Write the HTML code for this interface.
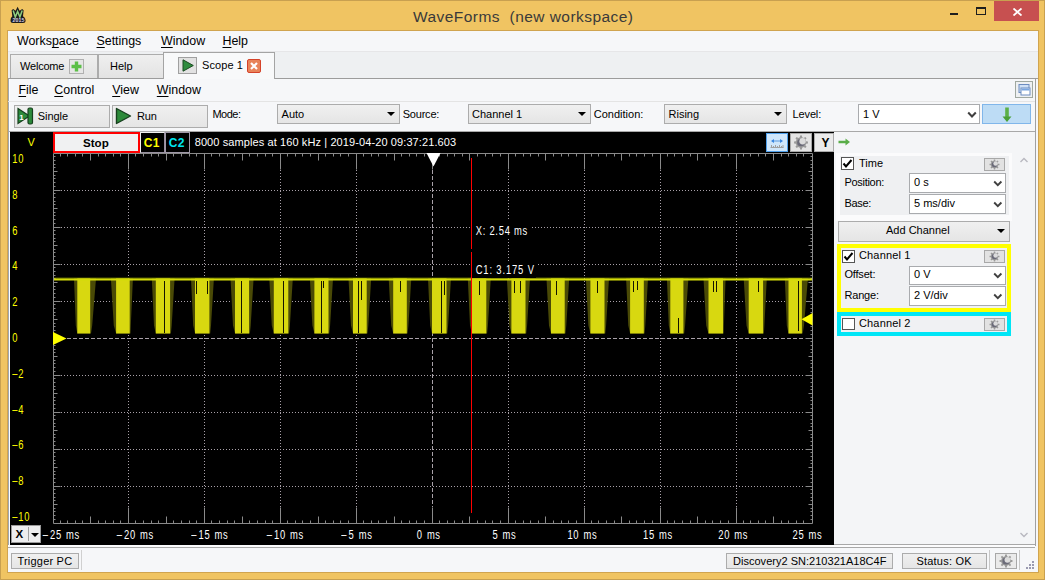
<!DOCTYPE html>
<html><head><meta charset="utf-8"><style>
*{margin:0;padding:0;box-sizing:border-box}
html,body{width:1045px;height:580px;overflow:hidden;background:#f0c462;font-family:"Liberation Sans",sans-serif;font-size:12px;color:#000}
.a{position:absolute}
.t{position:absolute;white-space:nowrap;line-height:1}
.btn{position:absolute;border:1px solid #acacac;background:linear-gradient(#f0f0f0,#e5e5e5)}
.cmb{position:absolute;border:1px solid #acacac;background:linear-gradient(#f0f0f0,#e5e5e5)}
.cmbw{position:absolute;border:1px solid #a9abae;background:#fff}
.arr{position:absolute;width:0;height:0;border-left:4px solid transparent;border-right:4px solid transparent;border-top:4px solid #000}
u{text-decoration:underline;text-underline-offset:1.5px}
svg .dot{stroke:#a8a0a8;stroke-width:1;stroke-dasharray:1 2}
svg .dash{stroke:#a8a0a8;stroke-width:1;stroke-dasharray:4 2}
svg .ax{stroke:#8a8a8a;stroke-width:1;fill:none}
</style></head><body>
<svg class="a" style="left:0;top:0" width="40" height="30"><path d="M10.5 20.5Q10.5 17.8 12.3 16.3L11.6 10.2L13.2 9L15.6 10.8L17.6 6.8L19.6 10.8L22.2 9L23.6 10.2L23 16.3Q25.6 17.8 25.6 20.5Q25.6 23 23 23H13Q10.5 23 10.5 20.5Z" fill="#1c1c1c"/><path d="M13.2 10.5L15.3 17L17.6 11.5L19.9 17L22.2 10.5" stroke="#90d080" stroke-width="1.5" fill="none"/><text x="12.6" y="21.6" font-size="5.2" font-weight="bold" fill="#d8d0e8" font-family="Liberation Sans" letter-spacing="0.1">2015</text></svg>
<div class="t" style="left:413.0px;top:8.98px;font-size:15.5px;color:#3a3a3a;letter-spacing:0.45px">WaveForms&nbsp;&nbsp;(new workspace)</div>
<div class="a" style="left:950px;top:13px;width:8px;height:2px;background:#1e1e1e"></div>
<div class="a" style="left:976px;top:7px;width:10px;height:8px;border:1px solid #1e1e1e;border-top-width:2px"></div>
<div class="a" style="left:994px;top:1px;width:45px;height:20px;background:#c75050"></div>
<svg class="a" style="left:1013px;top:8px" width="9" height="8"><path d="M0.5 0.5L8.5 7.5M8.5 0.5L0.5 7.5" stroke="#fff" stroke-width="1.8"/></svg>
<div class="a" style="left:8px;top:31px;width:1030px;height:541px;background:#f6f7f9"></div>
<div class="a" style="left:7px;top:30px;width:1032px;height:543px;border:1px solid #d0a450"></div>
<div class="a" style="left:0;top:0;width:1045px;height:580px;border:1px solid #c8a050"></div>
<div class="a" style="left:8px;top:79px;width:1px;height:466px;background:#a0a8b0"></div>
<div class="a" style="left:9px;top:79px;width:1px;height:466px;background:#fff"></div>
<div class="t" style="left:17.0px;top:35.34px;font-size:12.4px;">Works<u>p</u>ace</div>
<div class="t" style="left:96.5px;top:35.34px;font-size:12.4px;"><u>S</u>ettings</div>
<div class="t" style="left:161.0px;top:35.34px;font-size:12.4px;"><u>W</u>indow</div>
<div class="t" style="left:222.5px;top:35.34px;font-size:12.4px;"><u>H</u>elp</div>
<div class="a" style="left:8px;top:51px;width:1030px;height:28px;background:#eef0f2;border-top:1px solid #e6e6e8;border-bottom:1px solid #9c9c9c"></div>
<div class="a" style="left:10px;top:54px;width:88px;height:24px;background:linear-gradient(#efefef,#e3e3e3);border:1px solid #acacac;border-bottom:none"></div>
<div class="t" style="left:20.0px;top:61.01px;font-size:11px;letter-spacing:-0.2px">Welcome</div>
<div class="a" style="left:69px;top:59px;width:15px;height:15px;border:1px solid #b0b0b0;background:#e6e6e6"></div>
<svg class="a" style="left:69px;top:59px" width="15" height="15"><path d="M7.5 2.5V12.5M2.5 7.5H12.5" stroke="#5cbf48" stroke-width="3.4"/></svg>
<div class="a" style="left:98px;top:54px;width:68px;height:24px;background:linear-gradient(#efefef,#e3e3e3);border:1px solid #acacac;border-bottom:none"></div>
<div class="t" style="left:110.0px;top:61.01px;font-size:11px;">Help</div>
<div class="a" style="left:163px;top:52px;width:112px;height:27px;background:#f8f9fa;border:1px solid #a4a4a4;border-bottom:none"></div>
<div class="a" style="left:178px;top:57px;width:19px;height:17px;border:1px solid #a0a0a0;background:#e2e2e2"></div>
<svg class="a" style="left:182px;top:59px" width="12" height="13"><path d="M1 0.8L11.3 6.5L1 12.2Z" fill="#2e8c3e" stroke="#1b4a22" stroke-width="1"/></svg>
<div class="t" style="left:202.0px;top:59.71px;font-size:11px;letter-spacing:0.1px">Scope 1</div>
<div class="a" style="left:247px;top:59px;width:14px;height:14px;background:#e8845a;border:1px solid #d5432a;border-radius:2px"></div>
<svg class="a" style="left:247px;top:59px" width="14" height="14"><path d="M4 4L10 10M10 4L4 10" stroke="#fff" stroke-width="2.2"/></svg>
<div class="t" style="left:18.5px;top:84.04px;font-size:12.4px;"><u>F</u>ile</div>
<div class="t" style="left:54.3px;top:84.04px;font-size:12.4px;"><u>C</u>ontrol</div>
<div class="t" style="left:112.2px;top:84.04px;font-size:12.4px;"><u>V</u>iew</div>
<div class="t" style="left:156.8px;top:84.04px;font-size:12.4px;"><u>W</u>indow</div>
<div class="a" style="left:1035px;top:79px;width:1px;height:467px;background:#a0a0a0"></div>
<div class="a" style="left:1015px;top:81px;width:18px;height:17px;border:1px solid #a0a8a0;background:#eef0f2"></div>
<svg class="a" style="left:1015px;top:81px" width="18" height="17"><rect x="4" y="3.5" width="10" height="8" fill="#cfe0f5" stroke="#6c8cc0"/><rect x="6" y="7" width="9" height="7" fill="#fff" stroke="#6c8cc0"/><rect x="6.5" y="7.5" width="8" height="2" fill="#7aa6e0"/></svg>
<div class="a" style="left:8px;top:101px;width:1027px;height:1px;background:#e4e4e4"></div>
<div class="btn" style="left:14px;top:105px;width:96px;height:23px"></div>
<svg class="a" style="left:16px;top:106px" width="20" height="20"><path d="M2 2.5L13.5 10L2 17.5Z" fill="#2c8a3a" stroke="#173f1e" stroke-width="1.2"/><rect x="12" y="2" width="4.5" height="16" rx="1.5" fill="#2c8a3a" stroke="#173f1e" stroke-width="1.2"/><text x="3.2" y="13.5" font-size="8" font-weight="bold" fill="#fff" font-family="Liberation Sans">1</text></svg>
<div class="t" style="left:37.8px;top:110.71px;font-size:11px;letter-spacing:-0.05px">Single</div>
<div class="btn" style="left:112px;top:105px;width:96px;height:23px"></div>
<svg class="a" style="left:114px;top:106px" width="20" height="20"><path d="M2.5 2.5L16.5 10L2.5 17.5Z" fill="#2c8a3a" stroke="#173f1e" stroke-width="1.4" stroke-linejoin="round"/></svg>
<div class="t" style="left:137.0px;top:111.11px;font-size:11px;letter-spacing:-0.2px">Run</div>
<div class="t" style="left:212.4px;top:109.11px;font-size:11px;letter-spacing:-0.5px">Mode:</div>
<div class="cmb" style="left:277px;top:104px;width:123px;height:20px"></div>
<div class="t" style="left:281.6px;top:109.11px;font-size:11px;">Auto</div>
<div class="arr" style="left:387px;top:112px"></div>
<div class="cmb" style="left:468px;top:104px;width:123px;height:20px"></div>
<div class="t" style="left:472.0px;top:109.11px;font-size:11px;">Channel 1</div>
<div class="arr" style="left:578px;top:112px"></div>
<div class="cmb" style="left:664px;top:104px;width:123px;height:20px"></div>
<div class="t" style="left:668.5px;top:109.11px;font-size:11px;">Rising</div>
<div class="arr" style="left:774px;top:112px"></div>
<div class="t" style="left:402.7px;top:109.11px;font-size:11px;letter-spacing:-0.2px">Source:</div>
<div class="t" style="left:593.8px;top:109.11px;font-size:11px;letter-spacing:0px">Condition:</div>
<div class="t" style="left:792.6px;top:109.11px;font-size:11px;letter-spacing:-0.15px">Level:</div>
<div class="cmbw" style="left:858px;top:104px;width:122px;height:20px"></div>
<div class="t" style="left:863.0px;top:109.11px;font-size:11px;">1 V</div>
<svg class="a" style="left:967px;top:111px" width="10" height="8"><path d="M1.2 1.5L5 5.5L8.8 1.5" stroke="#404040" stroke-width="2" fill="none"/></svg>
<div class="a" style="left:982px;top:104px;width:49px;height:20px;background:#bddcf5;border:1px solid #80b6ea"></div>
<svg class="a" style="left:1000px;top:106px" width="14" height="17"><rect x="5.2" y="1.5" width="3.6" height="10" fill="#5cb048"/><path d="M2.5 10.5H11.5L7 16Z" fill="#4aa038"/></svg>
<div class="a" style="left:8px;top:131px;width:1027px;height:1px;background:#a8a8a8"></div>
<div class="a" style="left:10px;top:132px;width:824px;height:413px;background:#000"></div>
<div class="t" style="left:27.4px;top:137.21px;font-size:11px;color:#ffff00">V</div>
<div class="a" style="left:53px;top:132px;width:87px;height:21px;background:#f0f1f2;border:2px solid #ff0000"></div>
<div class="t" style="left:83.0px;top:137.14px;font-size:11.6px;font-weight:bold;">Stop</div>
<div class="a" style="left:140px;top:132px;width:25px;height:21px;border:1px solid;border-color:#f0f0f0 #9890a0 #9890a0 #f0f0f0;background:#000"></div>
<div class="t" style="left:143.7px;top:137.19px;font-size:12px;font-weight:bold;color:#ffff00;letter-spacing:0.3px">C1</div>
<div class="a" style="left:165px;top:132px;width:25px;height:21px;border:1px solid #a098a8;background:#000"></div>
<div class="t" style="left:168.7px;top:137.19px;font-size:12px;font-weight:bold;color:#00e6f0;letter-spacing:0.3px">C2</div>
<div class="t" style="left:194.7px;top:137.31px;font-size:11px;color:#fff;letter-spacing:0.1px">8000 samples at 160 kHz | 2019-04-20 09:37:21.603</div>
<div class="a" style="left:766px;top:133px;width:22px;height:19px;background:#cfe6fb;border:1px solid #4fa0ec"></div>
<svg class="a" style="left:766px;top:133px" width="22" height="19"><path d="M6 8H16" stroke="#5a9ae0" stroke-width="1"/><path d="M5 8L8 6V10Z M17 8L14 6V10Z" fill="#3a86e0"/><path d="M4.5 14.5H17.5M5.5 14.5V12M7.5 14.5V13M9.5 14.5V12M11.5 14.5V13M13.5 14.5V12M15.5 14.5V13M17 14.5V12" stroke="#a0a0a0" stroke-width="1" fill="none"/></svg>
<div class="a" style="left:790px;top:133px;width:22px;height:19px;border:1px solid #a8a8a8;background:#e4e4e4"></div><svg class="a" style="left:790px;top:133px" width="22" height="19"><path d="M16.13 8.37L17.93 8.54L17.93 10.46L16.13 10.63L15.42 12.33L16.58 13.72L15.22 15.08L13.83 13.92L12.13 14.63L11.96 16.43L10.04 16.43L9.87 14.63L8.17 13.92L6.78 15.08L5.42 13.72L6.58 12.33L5.87 10.63L4.07 10.46L4.07 8.54L5.87 8.37L6.58 6.67L5.42 5.28L6.78 3.92L8.17 5.08L9.87 4.37L10.04 2.57L11.96 2.57L12.13 4.37L13.83 5.08L15.22 3.92L16.58 5.28L15.42 6.67Z" fill="#9a9a9a"/><circle cx="11.0" cy="9.5" r="3.85" fill="#6a6a78"/><circle cx="12.54" cy="8.24" r="3.15" fill="#dcdcdc"/></svg>
<div class="a" style="left:814px;top:133px;width:20px;height:19px;background:#ebebeb;border:1px solid #ababab"></div>
<div class="t" style="left:821.5px;top:137.09px;font-size:12px;font-weight:bold;">Y</div>
<svg class="a" style="left:0;top:0" width="1045" height="580">
<line x1="128.5" y1="170" x2="128.5" y2="507" class="dot"/>
<line x1="204.5" y1="170" x2="204.5" y2="507" class="dot"/>
<line x1="280.5" y1="170" x2="280.5" y2="507" class="dot"/>
<line x1="356.5" y1="170" x2="356.5" y2="507" class="dot"/>
<line x1="508.5" y1="170" x2="508.5" y2="507" class="dot"/>
<line x1="584.5" y1="170" x2="584.5" y2="507" class="dot"/>
<line x1="660.5" y1="170" x2="660.5" y2="507" class="dot"/>
<line x1="736.5" y1="170" x2="736.5" y2="507" class="dot"/>
<line x1="61" y1="190.5" x2="805" y2="190.5" class="dot"/>
<line x1="61" y1="227.5" x2="805" y2="227.5" class="dot"/>
<line x1="61" y1="264.5" x2="805" y2="264.5" class="dot"/>
<line x1="61" y1="301.5" x2="805" y2="301.5" class="dot"/>
<line x1="61" y1="375.5" x2="805" y2="375.5" class="dot"/>
<line x1="61" y1="412.5" x2="805" y2="412.5" class="dot"/>
<line x1="61" y1="449.5" x2="805" y2="449.5" class="dot"/>
<line x1="61" y1="486.5" x2="805" y2="486.5" class="dot"/>
<line x1="432.5" y1="170" x2="432.5" y2="507" class="dash"/>
<line x1="61" y1="338.5" x2="805" y2="338.5" class="dash"/>
<path d="M53.5 153.5 H812.5 V523.5 H53.5 Z" class="ax"/>
<path d="M60.5 153.5v3M60.5 523.5v-3M67.5 153.5v3M67.5 523.5v-3M75.5 153.5v3M75.5 523.5v-3M82.5 153.5v3M82.5 523.5v-3M90.5 153.5v7M90.5 523.5v-7M98.5 153.5v3M98.5 523.5v-3M105.5 153.5v3M105.5 523.5v-3M113.5 153.5v3M113.5 523.5v-3M120.5 153.5v3M120.5 523.5v-3M128.5 153.5v16M128.5 523.5v-16M135.5 153.5v3M135.5 523.5v-3M143.5 153.5v3M143.5 523.5v-3M151.5 153.5v3M151.5 523.5v-3M158.5 153.5v3M158.5 523.5v-3M166.5 153.5v7M166.5 523.5v-7M173.5 153.5v3M173.5 523.5v-3M181.5 153.5v3M181.5 523.5v-3M189.5 153.5v3M189.5 523.5v-3M196.5 153.5v3M196.5 523.5v-3M204.5 153.5v16M204.5 523.5v-16M211.5 153.5v3M211.5 523.5v-3M219.5 153.5v3M219.5 523.5v-3M227.5 153.5v3M227.5 523.5v-3M234.5 153.5v3M234.5 523.5v-3M242.5 153.5v7M242.5 523.5v-7M249.5 153.5v3M249.5 523.5v-3M257.5 153.5v3M257.5 523.5v-3M265.5 153.5v3M265.5 523.5v-3M272.5 153.5v3M272.5 523.5v-3M280.5 153.5v16M280.5 523.5v-16M287.5 153.5v3M287.5 523.5v-3M295.5 153.5v3M295.5 523.5v-3M302.5 153.5v3M302.5 523.5v-3M310.5 153.5v3M310.5 523.5v-3M318.5 153.5v7M318.5 523.5v-7M325.5 153.5v3M325.5 523.5v-3M333.5 153.5v3M333.5 523.5v-3M340.5 153.5v3M340.5 523.5v-3M348.5 153.5v3M348.5 523.5v-3M356.5 153.5v16M356.5 523.5v-16M363.5 153.5v3M363.5 523.5v-3M371.5 153.5v3M371.5 523.5v-3M378.5 153.5v3M378.5 523.5v-3M386.5 153.5v3M386.5 523.5v-3M394.5 153.5v7M394.5 523.5v-7M401.5 153.5v3M401.5 523.5v-3M409.5 153.5v3M409.5 523.5v-3M416.5 153.5v3M416.5 523.5v-3M424.5 153.5v3M424.5 523.5v-3M432.5 153.5v16M432.5 523.5v-16M439.5 153.5v3M439.5 523.5v-3M447.5 153.5v3M447.5 523.5v-3M454.5 153.5v3M454.5 523.5v-3M462.5 153.5v3M462.5 523.5v-3M469.5 153.5v7M469.5 523.5v-7M477.5 153.5v3M477.5 523.5v-3M485.5 153.5v3M485.5 523.5v-3M492.5 153.5v3M492.5 523.5v-3M500.5 153.5v3M500.5 523.5v-3M508.5 153.5v16M508.5 523.5v-16M515.5 153.5v3M515.5 523.5v-3M523.5 153.5v3M523.5 523.5v-3M530.5 153.5v3M530.5 523.5v-3M538.5 153.5v3M538.5 523.5v-3M545.5 153.5v7M545.5 523.5v-7M553.5 153.5v3M553.5 523.5v-3M561.5 153.5v3M561.5 523.5v-3M568.5 153.5v3M568.5 523.5v-3M576.5 153.5v3M576.5 523.5v-3M584.5 153.5v16M584.5 523.5v-16M591.5 153.5v3M591.5 523.5v-3M598.5 153.5v3M598.5 523.5v-3M606.5 153.5v3M606.5 523.5v-3M614.5 153.5v3M614.5 523.5v-3M621.5 153.5v7M621.5 523.5v-7M629.5 153.5v3M629.5 523.5v-3M636.5 153.5v3M636.5 523.5v-3M644.5 153.5v3M644.5 523.5v-3M652.5 153.5v3M652.5 523.5v-3M660.5 153.5v16M660.5 523.5v-16M667.5 153.5v3M667.5 523.5v-3M674.5 153.5v3M674.5 523.5v-3M682.5 153.5v3M682.5 523.5v-3M690.5 153.5v3M690.5 523.5v-3M697.5 153.5v7M697.5 523.5v-7M705.5 153.5v3M705.5 523.5v-3M712.5 153.5v3M712.5 523.5v-3M720.5 153.5v3M720.5 523.5v-3M728.5 153.5v3M728.5 523.5v-3M736.5 153.5v16M736.5 523.5v-16M743.5 153.5v3M743.5 523.5v-3M750.5 153.5v3M750.5 523.5v-3M758.5 153.5v3M758.5 523.5v-3M765.5 153.5v3M765.5 523.5v-3M773.5 153.5v7M773.5 523.5v-7M781.5 153.5v3M781.5 523.5v-3M788.5 153.5v3M788.5 523.5v-3M796.5 153.5v3M796.5 523.5v-3M803.5 153.5v3M803.5 523.5v-3M53.5 156.5h2M812.5 156.5h-2M53.5 160.5h2M812.5 160.5h-2M53.5 164.5h2M812.5 164.5h-2M53.5 167.5h2M812.5 167.5h-2M53.5 171.5h4M812.5 171.5h-4M53.5 175.5h2M812.5 175.5h-2M53.5 178.5h2M812.5 178.5h-2M53.5 182.5h2M812.5 182.5h-2M53.5 186.5h2M812.5 186.5h-2M53.5 190.5h7M812.5 190.5h-7M53.5 193.5h2M812.5 193.5h-2M53.5 197.5h2M812.5 197.5h-2M53.5 201.5h2M812.5 201.5h-2M53.5 204.5h2M812.5 204.5h-2M53.5 208.5h4M812.5 208.5h-4M53.5 212.5h2M812.5 212.5h-2M53.5 215.5h2M812.5 215.5h-2M53.5 219.5h2M812.5 219.5h-2M53.5 223.5h2M812.5 223.5h-2M53.5 227.5h7M812.5 227.5h-7M53.5 230.5h2M812.5 230.5h-2M53.5 234.5h2M812.5 234.5h-2M53.5 238.5h2M812.5 238.5h-2M53.5 241.5h2M812.5 241.5h-2M53.5 245.5h4M812.5 245.5h-4M53.5 249.5h2M812.5 249.5h-2M53.5 252.5h2M812.5 252.5h-2M53.5 256.5h2M812.5 256.5h-2M53.5 260.5h2M812.5 260.5h-2M53.5 264.5h7M812.5 264.5h-7M53.5 267.5h2M812.5 267.5h-2M53.5 271.5h2M812.5 271.5h-2M53.5 275.5h2M812.5 275.5h-2M53.5 278.5h2M812.5 278.5h-2M53.5 282.5h4M812.5 282.5h-4M53.5 286.5h2M812.5 286.5h-2M53.5 289.5h2M812.5 289.5h-2M53.5 293.5h2M812.5 293.5h-2M53.5 297.5h2M812.5 297.5h-2M53.5 301.5h7M812.5 301.5h-7M53.5 304.5h2M812.5 304.5h-2M53.5 308.5h2M812.5 308.5h-2M53.5 312.5h2M812.5 312.5h-2M53.5 315.5h2M812.5 315.5h-2M53.5 319.5h4M812.5 319.5h-4M53.5 323.5h2M812.5 323.5h-2M53.5 326.5h2M812.5 326.5h-2M53.5 330.5h2M812.5 330.5h-2M53.5 334.5h2M812.5 334.5h-2M53.5 338.5h7M812.5 338.5h-7M53.5 341.5h2M812.5 341.5h-2M53.5 345.5h2M812.5 345.5h-2M53.5 349.5h2M812.5 349.5h-2M53.5 352.5h2M812.5 352.5h-2M53.5 356.5h4M812.5 356.5h-4M53.5 360.5h2M812.5 360.5h-2M53.5 363.5h2M812.5 363.5h-2M53.5 367.5h2M812.5 367.5h-2M53.5 371.5h2M812.5 371.5h-2M53.5 375.5h7M812.5 375.5h-7M53.5 378.5h2M812.5 378.5h-2M53.5 382.5h2M812.5 382.5h-2M53.5 386.5h2M812.5 386.5h-2M53.5 389.5h2M812.5 389.5h-2M53.5 393.5h4M812.5 393.5h-4M53.5 397.5h2M812.5 397.5h-2M53.5 400.5h2M812.5 400.5h-2M53.5 404.5h2M812.5 404.5h-2M53.5 408.5h2M812.5 408.5h-2M53.5 412.5h7M812.5 412.5h-7M53.5 415.5h2M812.5 415.5h-2M53.5 419.5h2M812.5 419.5h-2M53.5 423.5h2M812.5 423.5h-2M53.5 426.5h2M812.5 426.5h-2M53.5 430.5h4M812.5 430.5h-4M53.5 434.5h2M812.5 434.5h-2M53.5 437.5h2M812.5 437.5h-2M53.5 441.5h2M812.5 441.5h-2M53.5 445.5h2M812.5 445.5h-2M53.5 449.5h7M812.5 449.5h-7M53.5 452.5h2M812.5 452.5h-2M53.5 456.5h2M812.5 456.5h-2M53.5 460.5h2M812.5 460.5h-2M53.5 463.5h2M812.5 463.5h-2M53.5 467.5h4M812.5 467.5h-4M53.5 471.5h2M812.5 471.5h-2M53.5 474.5h2M812.5 474.5h-2M53.5 478.5h2M812.5 478.5h-2M53.5 482.5h2M812.5 482.5h-2M53.5 486.5h7M812.5 486.5h-7M53.5 489.5h2M812.5 489.5h-2M53.5 493.5h2M812.5 493.5h-2M53.5 497.5h2M812.5 497.5h-2M53.5 500.5h2M812.5 500.5h-2M53.5 504.5h4M812.5 504.5h-4M53.5 508.5h2M812.5 508.5h-2M53.5 511.5h2M812.5 511.5h-2M53.5 515.5h2M812.5 515.5h-2M53.5 519.5h2M812.5 519.5h-2" class="ax"/>
<path d="M74.0 278.5L75.8 325.6L77.3 333.6H91.0L92.2 325.6L96.0 278.5ZM110.9 278.5L113.8 325.6L116.1 333.6H130.5L130.8 325.6L132.9 278.5ZM151.8 278.5L154.0 325.6L155.8 333.6H170.9L171.7 325.6L174.6 278.5ZM191.0 278.5L193.2 325.6L195.0 333.6H210.2L211.0 325.6L213.9 278.5ZM230.5 278.5L233.0 325.6L235.0 333.6H249.9L250.7 325.6L253.6 278.5ZM269.3 278.5L271.8 325.6L273.8 333.6H289.1L289.9 325.6L292.8 278.5ZM309.9 278.5L312.4 325.6L314.4 333.6H329.3L330.1 325.6L333.0 278.5ZM348.5 278.5L351.0 325.6L353.0 333.6H367.5L368.3 325.6L371.2 278.5ZM388.7 278.5L391.2 325.6L393.2 333.6H407.6L408.4 325.6L411.3 278.5ZM428.0 278.5L430.2 325.6L432.0 333.6H447.3L448.1 325.6L451.0 278.5ZM467.8 278.5L470.0 325.6L471.8 333.6H487.1L487.9 325.6L490.8 278.5ZM506.9 278.5L509.4 325.6L511.4 333.6H526.3L527.1 325.6L530.0 278.5ZM546.5 278.5L549.0 325.6L551.0 333.6H565.5L566.3 325.6L569.2 278.5ZM585.9 278.5L588.4 325.6L590.4 333.6H605.3L606.1 325.6L609.0 278.5ZM626.1 278.5L628.3 325.6L630.1 333.6H644.6L645.3 325.6L648.0 278.5ZM666.9 278.5L668.8 325.6L670.3 333.6H684.2L685.1 325.6L688.4 278.5ZM703.5 278.5L706.2 325.6L708.5 333.6H723.8L723.9 325.6L725.6 278.5ZM743.7 278.5L746.5 325.6L748.7 333.6H763.9L764.4 325.6L766.8 278.5ZM784.8 278.5L786.8 325.6L788.5 333.6H802.7L804.0 325.6L807.9 278.5Z" fill="#4a4a06"/>
<path d="M77.3 278.5H90.2V333.6H77.3ZM116.1 278.5H129.7V333.6H116.1ZM155.8 278.5H170.1V333.6H155.8ZM195.0 278.5H209.4V333.6H195.0ZM235.0 278.5H249.1V333.6H235.0ZM273.8 278.5H288.3V333.6H273.8ZM314.4 278.5H328.5V333.6H314.4ZM353.0 278.5H366.7V333.6H353.0ZM393.2 278.5H406.8V333.6H393.2ZM432.0 278.5H446.5V333.6H432.0ZM471.8 278.5H486.3V333.6H471.8ZM511.4 278.5H525.5V333.6H511.4ZM551.0 278.5H564.7V333.6H551.0ZM590.4 278.5H604.5V333.6H590.4ZM630.1 278.5H643.8V333.6H630.1ZM670.3 278.5H683.4V333.6H670.3ZM708.5 278.5H723.0V333.6H708.5ZM748.7 278.5H763.1V333.6H748.7ZM788.5 278.5H801.9V333.6H788.5Z" fill="#d8d810"/>
<rect x="54" y="277" width="758" height="1" fill="#3a4200" opacity="0.7"/><rect x="54" y="278.3" width="758" height="2.2" fill="#d4dc08"/>
<path d="M164.5 281V333M196.5 281V294M207.5 281V294M241.5 281V333M283.5 281V333M321.5 281V333M323.5 281V288M358.5 281V333M361.5 281V300M400.5 281V292M441.5 281V333M444.5 281V295M479.5 281V295M514.5 281V293M520.5 281V293M556.5 281V295M597.5 281V293M633.5 281V292M637.5 281V290M678.5 318V333M713.5 281V292M716.5 281V292M758.5 281V292M798.5 281V331" stroke="#141400" stroke-width="1"/>
<rect x="472" y="220" width="59" height="19" fill="#000"/><rect x="472" y="262" width="64" height="16" fill="#000"/>
<rect x="471" y="158" width="1" height="91" fill="#ff0000"/><rect x="471" y="252" width="1" height="261" fill="#ff0000"/>
<path d="M426.5 153H440.5L433.5 166.5Z" fill="#fff"/>
<path d="M53 332V345L66.5 338.5Z" fill="#ffff00"/>
<path d="M812.5 313V325.5L801.5 319.2Z" fill="#ffff00"/>
</svg>
<div class="t" style="left:12.3px;top:152.96px;font-size:9.4px;color:#ffff00;transform:scaleY(1.3);transform-origin:0 0;letter-spacing:0.8px">10</div>
<div class="t" style="left:12.3px;top:188.76px;font-size:9.4px;color:#ffff00;transform:scaleY(1.3);transform-origin:0 0;letter-spacing:0.8px">8</div>
<div class="t" style="left:12.3px;top:224.56px;font-size:9.4px;color:#ffff00;transform:scaleY(1.3);transform-origin:0 0;letter-spacing:0.8px">6</div>
<div class="t" style="left:12.3px;top:260.36px;font-size:9.4px;color:#ffff00;transform:scaleY(1.3);transform-origin:0 0;letter-spacing:0.8px">4</div>
<div class="t" style="left:12.3px;top:296.16px;font-size:9.4px;color:#ffff00;transform:scaleY(1.3);transform-origin:0 0;letter-spacing:0.8px">2</div>
<div class="t" style="left:12.3px;top:331.96px;font-size:9.4px;color:#ffff00;transform:scaleY(1.3);transform-origin:0 0;letter-spacing:0.8px">0</div>
<div class="t" style="left:12.3px;top:367.76px;font-size:9.4px;color:#ffff00;transform:scaleY(1.3);transform-origin:0 0;letter-spacing:0.8px">&#8211;2</div>
<div class="t" style="left:12.3px;top:403.56px;font-size:9.4px;color:#ffff00;transform:scaleY(1.3);transform-origin:0 0;letter-spacing:0.8px">&#8211;4</div>
<div class="t" style="left:12.3px;top:439.36px;font-size:9.4px;color:#ffff00;transform:scaleY(1.3);transform-origin:0 0;letter-spacing:0.8px">&#8211;6</div>
<div class="t" style="left:12.3px;top:475.16px;font-size:9.4px;color:#ffff00;transform:scaleY(1.3);transform-origin:0 0;letter-spacing:0.8px">&#8211;8</div>
<div class="t" style="left:12.3px;top:510.96px;font-size:9.4px;color:#ffff00;transform:scaleY(1.3);transform-origin:0 0;letter-spacing:0.8px">&#8211;10</div>
<div class="t" style="left:42.8px;top:529.26px;font-size:9.4px;color:#fff;transform:scaleY(1.3);transform-origin:0 0;letter-spacing:0.65px;word-spacing:1.0px"><span style="margin-right:1.4px">&#8211;</span>25 ms</div>
<div class="t" style="left:116.8px;top:529.26px;font-size:9.4px;color:#fff;transform:scaleY(1.3);transform-origin:0 0;letter-spacing:0.65px;word-spacing:1.0px"><span style="margin-right:1.4px">&#8211;</span>20 ms</div>
<div class="t" style="left:191.3px;top:529.26px;font-size:9.4px;color:#fff;transform:scaleY(1.3);transform-origin:0 0;letter-spacing:0.65px;word-spacing:1.0px"><span style="margin-right:1.4px">&#8211;</span>15 ms</div>
<div class="t" style="left:266.8px;top:529.26px;font-size:9.4px;color:#fff;transform:scaleY(1.3);transform-origin:0 0;letter-spacing:0.65px;word-spacing:1.0px"><span style="margin-right:1.4px">&#8211;</span>10 ms</div>
<div class="t" style="left:341.3px;top:529.26px;font-size:9.4px;color:#fff;transform:scaleY(1.3);transform-origin:0 0;letter-spacing:0.65px;word-spacing:1.0px"><span style="margin-right:1.4px">&#8211;</span>5 ms</div>
<div class="t" style="left:416.8px;top:529.26px;font-size:9.4px;color:#fff;transform:scaleY(1.3);transform-origin:0 0;letter-spacing:0.65px;word-spacing:1.0px">0 ms</div>
<div class="t" style="left:492.40000000000003px;top:529.26px;font-size:9.4px;color:#fff;transform:scaleY(1.3);transform-origin:0 0;letter-spacing:0.65px;word-spacing:1.0px">5 ms</div>
<div class="t" style="left:567.5px;top:529.26px;font-size:9.4px;color:#fff;transform:scaleY(1.3);transform-origin:0 0;letter-spacing:0.65px;word-spacing:1.0px">10 ms</div>
<div class="t" style="left:643.0999999999999px;top:529.26px;font-size:9.4px;color:#fff;transform:scaleY(1.3);transform-origin:0 0;letter-spacing:0.65px;word-spacing:1.0px">15 ms</div>
<div class="t" style="left:718.3px;top:529.26px;font-size:9.4px;color:#fff;transform:scaleY(1.3);transform-origin:0 0;letter-spacing:0.65px;word-spacing:1.0px">20 ms</div>
<div class="t" style="left:792.5999999999999px;top:529.26px;font-size:9.4px;color:#fff;transform:scaleY(1.3);transform-origin:0 0;letter-spacing:0.65px;word-spacing:1.0px">25 ms</div>
<div class="a" style="left:11px;top:525px;width:30px;height:18px;background:#ededee;border:1px solid #9a9a9a"></div>
<div class="t" style="left:15.5px;top:529.25px;font-size:11.5px;font-weight:bold;">X</div>
<div class="a" style="left:28px;top:527px;width:1px;height:14px;background:#a0a0a0"></div>
<div class="arr" style="left:31px;top:533px;border-left-width:4px;border-right-width:4px;border-top-width:4px"></div>
<div class="t" style="left:475.7px;top:224.66px;font-size:9.4px;color:#fff;transform:scaleY(1.3);transform-origin:0 0;letter-spacing:0.75px">X: 2.54 ms</div>
<div class="t" style="left:475.7px;top:264.06px;font-size:9.4px;color:#fff;transform:scaleY(1.3);transform-origin:0 0;letter-spacing:0.87px">C1: 3.175 V</div>
<div class="a" style="left:834px;top:132px;width:201px;height:413px;background:#f4f5f7"></div>
<svg class="a" style="left:838px;top:138px" width="13" height="8"><path d="M0.5 4H8.5" stroke="#5aad48" stroke-width="2.5"/><path d="M7.5 0.5L12 4L7.5 7.5Z" fill="#5aad48"/></svg>
<div class="a" style="left:835.5px;top:152.5px;width:176px;height:68px;background:#fbfbfc"></div>
<div class="a" style="left:839.5px;top:156px;width:169px;height:59px;background:#eff0f2"></div>
<div class="a" style="left:841px;top:157px;width:13px;height:13px;border:1px solid #555;background:#fff"></div><svg class="a" style="left:841px;top:157px" width="13" height="13"><path d="M2.5 6.5L5 9.5L10.5 3" stroke="#000" stroke-width="2" fill="none"/></svg>
<div class="t" style="left:859.0px;top:158.01px;font-size:11px;">Time</div>
<div class="a" style="left:984px;top:157.5px;width:21px;height:13px;border:1px solid #a8a8a8;background:#e2e2e2"></div><svg class="a" style="left:984px;top:157.5px" width="21" height="13"><path d="M14.16 5.70L15.45 5.81L15.45 7.19L14.16 7.30L13.66 8.52L14.49 9.52L13.52 10.49L12.52 9.66L11.30 10.16L11.19 11.45L9.81 11.45L9.70 10.16L8.48 9.66L7.48 10.49L6.51 9.52L7.34 8.52L6.84 7.30L5.55 7.19L5.55 5.81L6.84 5.70L7.34 4.48L6.51 3.48L7.48 2.51L8.48 3.34L9.70 2.84L9.81 1.55L11.19 1.55L11.30 2.84L12.52 3.34L13.52 2.51L14.49 3.48L13.66 4.48Z" fill="#9a9a9a"/><circle cx="10.5" cy="6.5" r="2.75" fill="#6a6a78"/><circle cx="11.60" cy="5.60" r="2.25" fill="#dcdcdc"/></svg>
<div class="t" style="left:844.5px;top:177.31px;font-size:11px;letter-spacing:-0.3px">Position:</div>
<div class="cmbw" style="left:909px;top:173px;width:97px;height:20px"></div>
<div class="t" style="left:914.0px;top:177.31px;font-size:11px;">0 s</div>
<svg class="a" style="left:993px;top:180px" width="10" height="8"><path d="M1.2 1.5L4.8 5.2L8.4 1.5" stroke="#404040" stroke-width="1.9" fill="none"/></svg>
<div class="t" style="left:844.5px;top:198.01px;font-size:11px;letter-spacing:-0.3px">Base:</div>
<div class="cmbw" style="left:909px;top:194px;width:97px;height:20px"></div>
<div class="t" style="left:914.0px;top:198.01px;font-size:11px;">5 ms/div</div>
<svg class="a" style="left:993px;top:201px" width="10" height="8"><path d="M1.2 1.5L4.8 5.2L8.4 1.5" stroke="#404040" stroke-width="1.9" fill="none"/></svg>
<div class="btn" style="left:838px;top:221px;width:172px;height:21px"></div>
<div class="t" style="left:886.0px;top:225.31px;font-size:11px;letter-spacing:0px">Add Channel</div>
<div class="arr" style="left:996.5px;top:229px"></div>
<div class="a" style="left:837px;top:244px;width:174px;height:68px;border:4px solid #ffff00;background:#f0f1f3"></div>
<div class="a" style="left:841.5px;top:250px;width:13px;height:13px;border:1px solid #555;background:#fff"></div><svg class="a" style="left:841.5px;top:250px" width="13" height="13"><path d="M2.5 6.5L5 9.5L10.5 3" stroke="#000" stroke-width="2" fill="none"/></svg>
<div class="t" style="left:859.0px;top:250.21px;font-size:11px;letter-spacing:0.15px">Channel 1</div>
<div class="a" style="left:984px;top:249.5px;width:21px;height:13px;border:1px solid #a8a8a8;background:#e2e2e2"></div><svg class="a" style="left:984px;top:249.5px" width="21" height="13"><path d="M14.16 5.70L15.45 5.81L15.45 7.19L14.16 7.30L13.66 8.52L14.49 9.52L13.52 10.49L12.52 9.66L11.30 10.16L11.19 11.45L9.81 11.45L9.70 10.16L8.48 9.66L7.48 10.49L6.51 9.52L7.34 8.52L6.84 7.30L5.55 7.19L5.55 5.81L6.84 5.70L7.34 4.48L6.51 3.48L7.48 2.51L8.48 3.34L9.70 2.84L9.81 1.55L11.19 1.55L11.30 2.84L12.52 3.34L13.52 2.51L14.49 3.48L13.66 4.48Z" fill="#9a9a9a"/><circle cx="10.5" cy="6.5" r="2.75" fill="#6a6a78"/><circle cx="11.60" cy="5.60" r="2.25" fill="#dcdcdc"/></svg>
<div class="t" style="left:844.5px;top:269.01px;font-size:11px;letter-spacing:-0.2px">Offset:</div>
<div class="cmbw" style="left:909px;top:265.5px;width:97px;height:19px"></div>
<div class="t" style="left:914.0px;top:269.01px;font-size:11px;">0 V</div>
<svg class="a" style="left:993px;top:272px" width="10" height="8"><path d="M1.2 1.5L4.8 5.2L8.4 1.5" stroke="#404040" stroke-width="1.9" fill="none"/></svg>
<div class="t" style="left:844.5px;top:290.01px;font-size:11px;letter-spacing:-0.2px">Range:</div>
<div class="cmbw" style="left:909px;top:286px;width:97px;height:20px"></div>
<div class="t" style="left:914.0px;top:290.01px;font-size:11px;">2 V/div</div>
<svg class="a" style="left:993px;top:293px" width="10" height="8"><path d="M1.2 1.5L4.8 5.2L8.4 1.5" stroke="#404040" stroke-width="1.9" fill="none"/></svg>
<div class="a" style="left:837px;top:312px;width:174px;height:24px;border:4px solid #00e6f6;background:#f0f1f3"></div>
<div class="a" style="left:841.5px;top:318px;width:13px;height:12px;border:1px solid #555;background:#fff"></div>
<div class="t" style="left:859.0px;top:318.21px;font-size:11px;letter-spacing:0.15px">Channel 2</div>
<div class="a" style="left:984px;top:317.5px;width:21px;height:13px;border:1px solid #a8a8a8;background:#e2e2e2"></div><svg class="a" style="left:984px;top:317.5px" width="21" height="13"><path d="M14.16 5.70L15.45 5.81L15.45 7.19L14.16 7.30L13.66 8.52L14.49 9.52L13.52 10.49L12.52 9.66L11.30 10.16L11.19 11.45L9.81 11.45L9.70 10.16L8.48 9.66L7.48 10.49L6.51 9.52L7.34 8.52L6.84 7.30L5.55 7.19L5.55 5.81L6.84 5.70L7.34 4.48L6.51 3.48L7.48 2.51L8.48 3.34L9.70 2.84L9.81 1.55L11.19 1.55L11.30 2.84L12.52 3.34L13.52 2.51L14.49 3.48L13.66 4.48Z" fill="#9a9a9a"/><circle cx="10.5" cy="6.5" r="2.75" fill="#6a6a78"/><circle cx="11.60" cy="5.60" r="2.25" fill="#dcdcdc"/></svg>
<svg class="a" style="left:1019px;top:156px" width="10" height="8"><path d="M1.5 6L5 2.5L8.5 6" stroke="#b8b8c0" stroke-width="1.4" fill="none"/></svg>
<svg class="a" style="left:1019px;top:531px" width="10" height="8"><path d="M1.5 2L5 5.5L8.5 2" stroke="#b8b8c0" stroke-width="1.4" fill="none"/></svg>
<div class="a" style="left:8px;top:544.5px;width:1027px;height:2.5px;background:#fcfcfd"></div>
<div class="a" style="left:834px;top:544px;width:201px;height:1px;background:#a8a8a8"></div>
<div class="a" style="left:8px;top:547px;width:1027px;height:1px;background:#a8a8a8"></div>
<div class="btn" style="left:11px;top:553px;width:68px;height:16px"></div>
<div class="a" style="left:81px;top:550px;width:1px;height:20px;background:#d0d0d0"></div>
<div class="t" style="left:17.5px;top:555.51px;font-size:11px;letter-spacing:0.2px">Trigger PC</div>
<div class="btn" style="left:726px;top:553px;width:167px;height:16px"></div>
<div class="t" style="left:733.0px;top:555.51px;font-size:11px;letter-spacing:0.02px">Discovery2 SN:210321A18C4F</div>
<div class="btn" style="left:902px;top:553px;width:85px;height:16px"></div>
<div class="t" style="left:916.5px;top:555.51px;font-size:11px;letter-spacing:0.2px">Status: OK</div>
<div class="a" style="left:989px;top:550px;width:1px;height:20px;background:#c8c8c8"></div>
<div class="a" style="left:995px;top:553px;width:22px;height:16px;border:1px solid #a8a8a8;background:#eaeaea"></div><svg class="a" style="left:995px;top:553px" width="22" height="16"><path d="M15.76 6.96L17.44 7.11L17.44 8.89L15.76 9.04L15.11 10.63L16.18 11.92L14.92 13.18L13.63 12.11L12.04 12.76L11.89 14.44L10.11 14.44L9.96 12.76L8.37 12.11L7.08 13.18L5.82 11.92L6.89 10.63L6.24 9.04L4.56 8.89L4.56 7.11L6.24 6.96L6.89 5.37L5.82 4.08L7.08 2.82L8.37 3.89L9.96 3.24L10.11 1.56L11.89 1.56L12.04 3.24L13.63 3.89L14.92 2.82L16.18 4.08L15.11 5.37Z" fill="#9a9a9a"/><circle cx="11.0" cy="8.0" r="3.58" fill="#6a6a78"/><circle cx="12.43" cy="6.83" r="2.93" fill="#dcdcdc"/></svg>
<div class="a" style="left:1019px;top:550px;width:1px;height:20px;background:#c8c8c8"></div>
<svg class="a" style="left:1026px;top:561px" width="10" height="10"><g fill="#9a9ab0"><rect x="6" y="0" width="2" height="2"/><rect x="3" y="3" width="2" height="2"/><rect x="6" y="3" width="2" height="2"/><rect x="0" y="6" width="2" height="2"/><rect x="3" y="6" width="2" height="2"/><rect x="6" y="6" width="2" height="2"/></g></svg>
</body></html>
